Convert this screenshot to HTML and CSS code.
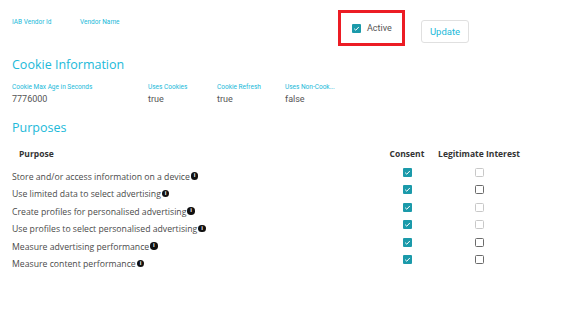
FILE: index.html
```html
<!DOCTYPE html>
<html lang="en">
<head>
  <meta charset="UTF-8" />
  <title>Vendor Details</title>
  <link rel="stylesheet" href="styles.css">
</head>
<body>
  <div class="top">
    <div class="field field-id"><span class="label">IAB Vendor Id</span></div>
    <div class="field field-name"><span class="label">Vendor Name</span></div>
    <div class="active-box">
      <span class="check on">
        <svg viewBox="0 0 10 10"><path d="M2.4 5.2 L4.2 6.9 L7.6 3.3" /></svg>
      </span>
      <span class="active-text">Active</span>
    </div>
    <button class="update-btn">Update</button>
  </div>

  <h2 class="section-title">Cookie Information</h2>
  <div class="info-row">
    <div class="field col-age"><span class="label">Cookie Max Age in Seconds</span><span class="value">7776000</span></div>
    <div class="field col-uses"><span class="label">Uses Cookies</span><span class="value">true</span></div>
    <div class="field col-refresh"><span class="label">Cookie Refresh</span><span class="value">true</span></div>
    <div class="field col-noncookie"><span class="label" title="Uses Non-Cookie Access">Uses Non-Cook...</span><span class="value">false</span></div>
  </div>

  <h2 class="section-title purposes-title">Purposes</h2>
  <div class="purpose-table">
    <div class="purpose-row head">
      <span class="th th-purpose">Purpose</span>
      <span class="th">Consent</span>
      <span class="th">Legitimate Interest</span>
    </div>

    <div class="purpose-row">
      <span class="purpose-name">Store and/or access information on a device<i class="info">i</i></span>
      <span class="cell"><span class="check on"><svg viewBox="0 0 10 10"><path d="M2.4 5.2 L4.2 6.9 L7.6 3.3" /></svg></span></span>
      <span class="cell"><span class="check off disabled"></span></span>
    </div>
    <div class="purpose-row">
      <span class="purpose-name">Use limited data to select advertising<i class="info">i</i></span>
      <span class="cell"><span class="check on"><svg viewBox="0 0 10 10"><path d="M2.4 5.2 L4.2 6.9 L7.6 3.3" /></svg></span></span>
      <span class="cell"><span class="check off"></span></span>
    </div>
    <div class="purpose-row">
      <span class="purpose-name">Create profiles for personalised advertising<i class="info">i</i></span>
      <span class="cell"><span class="check on"><svg viewBox="0 0 10 10"><path d="M2.4 5.2 L4.2 6.9 L7.6 3.3" /></svg></span></span>
      <span class="cell"><span class="check off disabled"></span></span>
    </div>
    <div class="purpose-row">
      <span class="purpose-name">Use profiles to select personalised advertising<i class="info">i</i></span>
      <span class="cell"><span class="check on"><svg viewBox="0 0 10 10"><path d="M2.4 5.2 L4.2 6.9 L7.6 3.3" /></svg></span></span>
      <span class="cell"><span class="check off disabled"></span></span>
    </div>
    <div class="purpose-row">
      <span class="purpose-name">Measure advertising performance<i class="info">i</i></span>
      <span class="cell"><span class="check on"><svg viewBox="0 0 10 10"><path d="M2.4 5.2 L4.2 6.9 L7.6 3.3" /></svg></span></span>
      <span class="cell"><span class="check off"></span></span>
    </div>
    <div class="purpose-row">
      <span class="purpose-name">Measure content performance<i class="info">i</i></span>
      <span class="cell"><span class="check on"><svg viewBox="0 0 10 10"><path d="M2.4 5.2 L4.2 6.9 L7.6 3.3" /></svg></span></span>
      <span class="cell"><span class="check off"></span></span>
    </div>
  </div>
</body>
</html>
```

FILE: styles.css
```css
:root {
  --cyan: #21b9d9;
  --teal: #1b9aaa;
  --text: #4a4a4a;
  --red: #ec1c24;
}

body {
  margin: 0;
  padding: 0 12px;
  background: white;
  font-family: Roboto, sans-serif;
  color: var(--text);
}

.top {
  display: flex;
  align-items: flex-start;
  padding-top: 10px;
  height: 36px;
}

.field {
  display: flex;
  flex-direction: column;
}

.label {
  font-size: 6.5px;
  line-height: 9px;
  color: var(--cyan);
  white-space: nowrap;
}

.top .field {
  padding-top: 8px;
}

.field-id {
  width: 68px;
}

.field-name {
  width: 258px;
}

.active-box {
  box-sizing: border-box;
  width: 67px;
  height: 36px;
  border: 3px solid var(--red);
  display: flex;
  align-items: center;
  gap: 6px;
  padding-left: 11px;
}

.active-text {
  font-size: 9px;
  color: #555;
}

.update-btn {
  margin: 10px 0 0 16px;
  width: 48px;
  height: 23px;
  padding: 0;
  background: white;
  border: 1px solid #e0e0e0;
  border-radius: 3px;
  font-family: Roboto, sans-serif;
  font-size: 9.5px;
  color: var(--cyan);
}

.section-title {
  margin: 10px 0 0;
  font-family: "Open Sans", sans-serif;
  font-weight: 400;
  font-size: 12.5px;
  line-height: 18px;
  color: var(--cyan);
}

.info-row {
  display: flex;
  margin-top: 9px;
}

.value {
  font-size: 9px;
  line-height: 12px;
  margin-top: 1px;
  color: #555;
}

.col-age { width: 136px; }
.col-uses { width: 69px; }
.col-refresh { width: 68px; }
.col-noncookie { width: 60px; }

.purposes-title {
  margin-top: 14px;
}

.purpose-table {
  width: 514px;
  margin-top: 11px;
  font-family: "Open Sans", sans-serif;
}

.purpose-row {
  display: grid;
  grid-template-columns: 1fr 50px 94px;
  height: 17.5px;
  align-items: start;
}

.purpose-row.head {
  height: 12px;
  margin-bottom: 3.5px;
  align-items: center;
}

.th {
  font-size: 8.5px;
  font-weight: 700;
  line-height: 12px;
  color: #333;
  text-align: center;
  white-space: nowrap;
}

.th-purpose {
  text-align: left;
  padding-left: 7px;
}

.purpose-name {
  font-size: 8.7px;
  line-height: 12px;
  padding-top: 7px;
  color: var(--text);
  white-space: nowrap;
}

.info {
  display: inline-block;
  width: 7.5px;
  height: 7.5px;
  border-radius: 50%;
  background: #111;
  color: white;
  font-style: normal;
  font-weight: 700;
  font-size: 5.5px;
  line-height: 7.5px;
  text-align: center;
  vertical-align: middle;
  margin: -2px 0 0 1px;
}

.cell {
  display: flex;
  justify-content: center;
  padding-top: 4px;
}

.check {
  box-sizing: border-box;
  display: inline-flex;
  width: 9px;
  height: 9px;
  border-radius: 1px;
}

.check svg {
  width: 9px;
  height: 9px;
}

.check path {
  fill: none;
  stroke: white;
  stroke-width: 1.1;
}

.check.on {
  background: var(--teal);
}

.check.off {
  background: white;
  border: 1.3px solid #6b6b6b;
  border-radius: 1.5px;
}

.check.off.disabled {
  border-color: #c8c8c8;
}
```
